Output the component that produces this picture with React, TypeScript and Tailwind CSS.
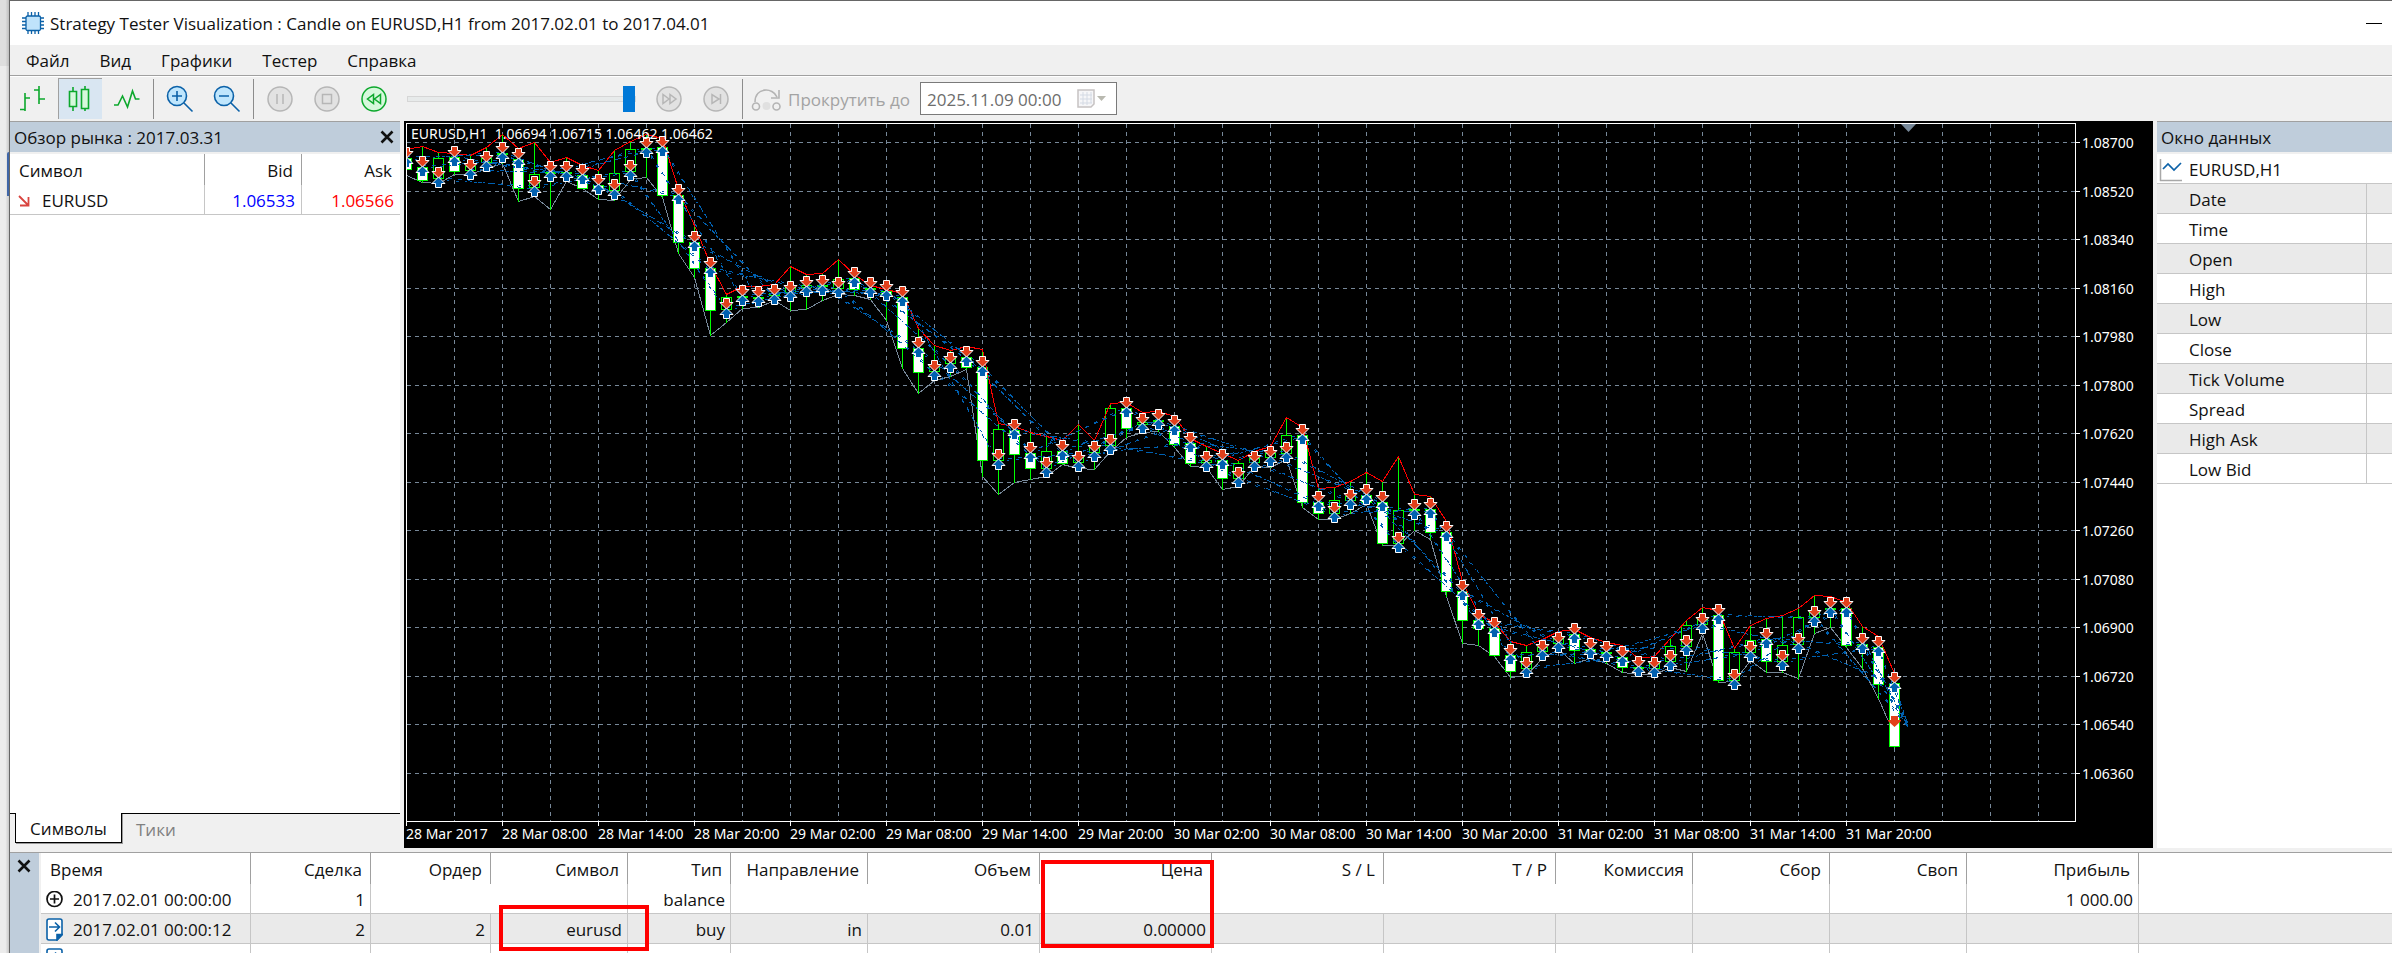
import React from "react";

type Candle = [x: number, open: number, high: number, low: number, close: number];

const FIRST_X = 406;
const STEP = 16;

const OHLC: [number, number, number, number][] = [
  [158, 150, 175, 169], [167, 147, 182, 180], [178, 153, 183, 158], [157, 154, 174, 171],
  [170, 156, 174, 166], [162, 148, 168, 158], [153, 135, 163, 154], [159, 149, 201, 188],
  [187, 143, 196, 174], [172, 163, 209, 173], [172, 158, 181, 173], [175, 166, 188, 188],
  [185, 171, 199, 188], [190, 151, 200, 173], [171, 142, 179, 149], [148, 135, 177, 149],
  [147, 139, 197, 195], [195, 190, 253, 242], [242, 226, 277, 268], [268, 265, 335, 310],
  [309, 295, 322, 297], [296, 287, 308, 297], [297, 287, 307, 298], [295, 285, 300, 293],
  [292, 267, 310, 287], [287, 275, 309, 285], [286, 274, 300, 285], [288, 260, 294, 279],
  [278, 275, 295, 289], [288, 286, 299, 289], [291, 290, 320, 295], [297, 294, 368, 348],
  [348, 329, 393, 372], [371, 346, 380, 366], [363, 351, 376, 358], [357, 347, 369, 367],
  [367, 350, 476, 460], [460, 424, 494, 429], [430, 427, 482, 454], [453, 433, 479, 468],
  [468, 437, 476, 451], [451, 441, 464, 463], [462, 425, 468, 457], [452, 441, 469, 447],
  [445, 404, 451, 408], [408, 403, 437, 428], [424, 413, 432, 422], [420, 412, 431, 421],
  [426, 417, 447, 444], [443, 439, 466, 463], [462, 447, 467, 460], [460, 454, 489, 478],
  [478, 461, 486, 463], [462, 452, 466, 458], [457, 447, 467, 453], [453, 418, 459, 435],
  [435, 428, 507, 502], [502, 489, 519, 513], [513, 488, 519, 500], [500, 482, 513, 496],
  [495, 473, 504, 502], [502, 482, 545, 543], [543, 457, 545, 510], [510, 495, 530, 509],
  [509, 497, 539, 532], [532, 522, 596, 591], [591, 582, 643, 620], [620, 615, 645, 628],
  [628, 623, 656, 655], [655, 642, 677, 671], [668, 646, 675, 652], [651, 640, 658, 647],
  [643, 632, 649, 637], [634, 630, 663, 650], [649, 638, 658, 651], [652, 643, 663, 653],
  [657, 646, 672, 667], [667, 659, 674, 668], [668, 657, 674, 662], [661, 639, 667, 646],
  [646, 621, 671, 625], [624, 608, 633, 619], [615, 611, 682, 680], [680, 649, 681, 652],
  [652, 626, 660, 640], [639, 619, 672, 661], [661, 616, 672, 645], [644, 609, 678, 617],
  [617, 596, 633, 611], [608, 597, 627, 609], [608, 603, 647, 645], [644, 627, 668, 646],
  [647, 637, 698, 684], [683, 674, 747, 746],
];

const CANDLES: Candle[] = OHLC.map(([o, h, l, c], i) => [FIRST_X + STEP * i, o, h, l, c]);

const PRICES = [
  "1.08700", "1.08520", "1.08340", "1.08160", "1.07980", "1.07800", "1.07620",
  "1.07440", "1.07260", "1.07080", "1.06900", "1.06720", "1.06540", "1.06360",
].map((label, i) => ({ label, y: 142 + Math.round(48.5 * i) }));

const TIMES = [
  "28 Mar 2017", "28 Mar 08:00", "28 Mar 14:00", "28 Mar 20:00", "29 Mar 02:00", "29 Mar 08:00",
  "29 Mar 14:00", "29 Mar 20:00", "30 Mar 02:00", "30 Mar 08:00", "30 Mar 14:00", "30 Mar 20:00",
  "31 Mar 02:00", "31 Mar 08:00", "31 Mar 14:00", "31 Mar 20:00",
].map((label, i) => ({ label, x: FIRST_X + 96 * i }));

const GRID_X = Array.from({ length: 34 }, (_, i) => 454 + 48 * i);

const points = (list: number[][]) => list.map(([x, y]) => `${x + 0.5},${y + 0.5}`).join(" ");

const HIGH_LINE = points(CANDLES.map(([x, , h]) => [x, h - 1]));
const LOW_LINE = points([...CANDLES.slice(0, -1).map(([x, , , l]) => [x, l]), [1888, 721]]);

const HOLD = 6;
const LAST = { x: 1908, y: 725 };
const DEALS = CANDLES.map(([x, open], i) => {
  const exit = CANDLES[i + HOLD];
  return { x, open, endX: exit ? exit[0] : LAST.x, endY: exit ? exit[1] : LAST.y };
});

function SellArrow({ x, y }: { x: number; y: number }) {
  return (
    <path
      d={`M${x - 2.5} ${y - 9.5}h6v4h3.500l-6.500 6.500l-6.500 -6.500h3.500z`}
      fill="#e2401c"
      stroke="#fff"
      strokeWidth="1"
    />
  );
}

function BuyArrow({ x, y }: { x: number; y: number }) {
  return (
    <path
      d={`M${x - 2.5} ${y + 10.5}h6v-4h3.500l-6.500 -6.500l-6.500 6.500h3.500z`}
      fill="#0060b0"
      stroke="#fff"
      strokeWidth="1"
    />
  );
}

function PriceChart() {
  return (
    <svg
      viewBox="404 121 1749 727"
      preserveAspectRatio="xMinYMin meet"
      className="block h-auto w-full bg-black"
      role="img"
      aria-label="EURUSD,H1"
    >
      <defs>
        <clipPath id="plot">
          <rect x="407" y="124" width="1668" height="697" />
        </clipPath>
      </defs>
      <g shapeRendering="crispEdges" stroke="#778899" strokeWidth="1" fill="none">
        {PRICES.map(({ y }) => (
          <line key={y} x1="407" x2="2075" y1={y + 0.5} y2={y + 0.5} strokeDasharray="4 4" />
        ))}
        {GRID_X.map((x) => (
          <line key={x} x1={x + 0.5} x2={x + 0.5} y1="124" y2="821" strokeDasharray="4 4" />
        ))}
      </g>
      <g clipPath="url(#plot)">
        <g shapeRendering="crispEdges" strokeWidth="1">
          <polyline points={LOW_LINE} fill="none" stroke="#778899" />
          {CANDLES.map(([x, o, h, l, c]) => {
            const top = Math.min(o, c);
            const height = Math.max(Math.abs(c - o), 1);
            return (
              <g key={x} stroke="#00ff00">
                <line x1={x + 0.5} x2={x + 0.5} y1={h} y2={l + 1} />
                <rect x={x - 4.5} y={top + 0.5} width="10" height={height} fill={c > o ? "#fff" : "#000"} />
              </g>
            );
          })}
          <polyline points={HIGH_LINE} fill="none" stroke="#ff0000" />
          <g stroke="#0060b0" fill="none">
            {DEALS.map((d) => (
              <g key={d.x}>
                <line x1={d.x} y1={d.open - 1} x2={d.endX} y2={d.endY + 2} strokeDasharray="4 6" />
                <line x1={d.x} y1={d.open + 2} x2={d.endX} y2={d.endY - 1} strokeDasharray="3 6 2 7" />
              </g>
            ))}
          </g>
        </g>
        {CANDLES.map(([x, o]) => (
          <g key={x}>
            <SellArrow x={x} y={o - 1} />
            <BuyArrow x={x} y={o - 1} />
          </g>
        ))}
        <path d="M1891 716h7v4h3v1l-6.500 6l-6.500 -6v-1h3z" fill="#e2401c" />
      </g>
      <path d="M1901 124h15l-7.500 8z" fill="#778899" />
      <g shapeRendering="crispEdges" stroke="#fff" fill="none">
        <path d="M406.500 821.500V123.500H2075.500V821.500H406.500" />
        {PRICES.map(({ y }) => (
          <line key={y} x1="2075" x2="2080" y1={y + 0.5} y2={y + 0.5} />
        ))}
        {TIMES.map(({ x }) => (
          <line key={x} x1={x + 0.5} x2={x + 0.5} y1="821" y2="826" />
        ))}
      </g>
      <g fill="#fff" fontFamily="'Noto Sans', 'DejaVu Sans', sans-serif" fontSize="14">
        <text x="411" y="139">{"EURUSD,H1\u00a0\u00a01.06694 1.06715 1.06462 1.06462"}</text>
        {PRICES.map(({ label, y }) => (
          <text key={label} x="2082" y={y + 6}>{label}</text>
        ))}
        {TIMES.map(({ label, x }) => (
          <text key={label} x={x} y="839">{label}</text>
        ))}
      </g>
    </svg>
  );
}

const toolButton = "flex h-[41px] w-11 items-center justify-center";

function ToolButton({ label, active, disabled, children }: {
  label: string; active?: boolean; disabled?: boolean; children: React.ReactNode;
}) {
  return (
    <button
      type="button"
      aria-label={label}
      disabled={disabled}
      className={active ? `${toolButton} border-t border-l border-[#a0a0a0] bg-[#d9e6f2]` : toolButton}
    >
      <svg width="28" height="28" viewBox="0 0 28 28" fill="none" strokeWidth="1.6">
        {children}
      </svg>
    </button>
  );
}

function Separator() {
  return <div className="mx-px h-10 w-px bg-[#8c8c8c]" />;
}

function Round({ green, children }: { green?: boolean; children: React.ReactNode }) {
  return (
    <g stroke={green ? "#0ca82c" : "#b6b6b6"} strokeWidth="1.5">
      <circle cx="14" cy="14" r="12" fill={green ? "#d6f8dc" : "#e2e2e2"} />
      {children}
    </g>
  );
}

function Toolbar() {
  return (
    <div className="flex h-11 items-center gap-[3px] border-t border-white pl-px">
      <ToolButton label="Бары">
        <path d="M1 24.500h5M6 26V8M6 13h5M15 5h5M20 1v18M20 14h6" stroke="#0ca82c" />
      </ToolButton>
      <ToolButton label="Свечи" active>
        <path d="M6 2v24M18 1v25" stroke="#0ca82c" />
        <path d="M2.500 6.500h7v15h-7zM14.500 4.500h7v19h-7z" stroke="#0ca82c" fill="#d6f8dc" />
      </ToolButton>
      <ToolButton label="Линия">
        <path d="M1 20h4l4.500-9 5 11 5-16 3 8h4" stroke="#0ca82c" />
      </ToolButton>
      <Separator />
      <ToolButton label="Увеличить">
        <g stroke="#0b61a8">
          <circle cx="11" cy="11" r="9.500" fill="#bfe6fd" />
          <path d="M18 18l8.500 8.500M6 11h10M11 6v10" />
        </g>
      </ToolButton>
      <ToolButton label="Уменьшить">
        <g stroke="#0b61a8">
          <circle cx="11" cy="11" r="9.500" fill="#bfe6fd" />
          <path d="M18 18l8.500 8.500M6 11h10" />
        </g>
      </ToolButton>
      <Separator />
      <ToolButton label="Пауза" disabled>
        <Round><path d="M11 9v10M17 9v10" /></Round>
      </ToolButton>
      <ToolButton label="Стоп" disabled>
        <Round><path d="M9.500 9.500h9v9h-9z" /></Round>
      </ToolButton>
      <ToolButton label="Медленнее">
        <Round green><path d="M13.500 9.500v9l-6-4.500zM20.500 9.500v9l-6-4.500z" /></Round>
      </ToolButton>
      <input
        type="range"
        aria-label="Скорость"
        defaultValue={100}
        className="mx-2 h-[26px] w-[229px] appearance-none bg-transparent [&::-webkit-slider-runnable-track]:h-[6px] [&::-webkit-slider-runnable-track]:border [&::-webkit-slider-runnable-track]:border-[#d6d6d6] [&::-webkit-slider-runnable-track]:bg-[#e7eaea] [&::-webkit-slider-thumb]:-mt-[11px] [&::-webkit-slider-thumb]:h-[26px] [&::-webkit-slider-thumb]:w-3 [&::-webkit-slider-thumb]:appearance-none [&::-webkit-slider-thumb]:bg-[#0078d7]"
      />
      <ToolButton label="Быстрее" disabled>
        <Round><path d="M8 9.500v9l6-4.500zM15 9.500v9l6-4.500z" /></Round>
      </ToolButton>
      <ToolButton label="В конец" disabled>
        <Round><path d="M10 9.500v9l7-4.500zM18.500 9v10" /></Round>
      </ToolButton>
      <Separator />
      <label htmlFor="skip-to" className="ml-1 flex items-center gap-[7px] pt-0.5 text-[#a3a3a3]">
        <svg width="30" height="28" viewBox="0 0 30 28" fill="none" stroke="#b4b4b4" strokeWidth="1.6">
          <circle cx="5" cy="20.500" r="3.500" />
          <circle cx="15.500" cy="20" r="4" fill="#e0e0e0" stroke="none" />
          <circle cx="25.500" cy="20.500" r="3.500" />
          <path d="M4 16C4 1 22 1 26 11M28 4v8h-8" />
        </svg>
        Прокрутить до
      </label>
      <div className="ml-[7px] flex h-[33px] w-[197px] items-center border border-[#7a7a7a] bg-white pl-1.5">
        <input
          id="skip-to"
          type="text"
          disabled
          defaultValue="2025.11.09 00:00"
          className="w-[150px] pt-0.5 text-[#6d6d6d]"
        />
        <svg width="30" height="20" viewBox="0 0 30 20" fill="none">
          <path d="M1 1h16v14l-3 3H1z" fill="#f6f6f8" stroke="#c6c2c2" strokeWidth="1.500" />
          <path d="M3 6h12M3 10h12M3 14h12M6 3v13M10 3v13M14 3v11" stroke="#d4dae4" />
          <path d="M20 7h9l-4.500 5z" fill="#b9b9b0" />
        </svg>
      </div>
    </div>
  );
}

function CloseIcon() {
  return (
    <svg width="14" height="14" viewBox="0 0 14 14" stroke="#111" strokeWidth="2.600">
      <path d="M1.500 1.500l11 11M12.500 1.500l-11 11" />
    </svg>
  );
}

function MarketWatch() {
  return (
    <section className="flex w-[390px] shrink-0 flex-col">
      <header className="flex h-[31px] shrink-0 items-center justify-between border-t border-[#a0a0a0] bg-[#bfcddb] pr-1.5 pl-1">
        <h2 className="pt-0.5">Обзор рынка : 2017.03.31</h2>
        <button type="button" aria-label="Закрыть"><CloseIcon /></button>
      </header>
      <div className="mt-0.5 flex-1 bg-white">
        <table className="w-full table-fixed border-separate border-spacing-0">
          <colgroup>
            <col />
            <col className="w-[97px]" />
            <col className="w-[98px]" />
          </colgroup>
          <thead>
            <tr className="text-right">
              <th className="h-[31px] border-r border-[#a0a0a0] pt-0.5 pl-[9px] text-left font-normal">Символ</th>
              <th className="border-r border-[#a0a0a0] pt-0.5 pr-2 font-normal">Bid</th>
              <th className="pt-0.5 pr-2 font-normal">Ask</th>
            </tr>
          </thead>
          <tbody>
            <tr className="text-right">
              <td className="h-[30px] border-r border-b border-[#c6c6c6] pt-0.5 text-left">
                <div className="flex items-center gap-3 pl-2">
                  <svg width="12" height="12" viewBox="0 0 12 12" fill="none" stroke="#d9443f" strokeWidth="1.800">
                    <path d="M1 1l9 9M10.500 2v8.500H2" />
                  </svg>
                  EURUSD
                </div>
              </td>
              <td className="border-r border-b border-[#c6c6c6] pt-0.5 pr-1.5 text-[#0000ff]">1.06533</td>
              <td className="border-b border-[#c6c6c6] pt-0.5 pr-1.5 text-[#ff0000]">1.06566</td>
            </tr>
          </tbody>
        </table>
      </div>
      <div role="tablist" className="flex h-[35px] shrink-0 items-start">
        <div className="h-px w-[5px] bg-black" />
        <button
          type="button"
          role="tab"
          aria-selected="true"
          className="h-[30px] w-[107px] border-x border-b border-black bg-white pt-0.5 shadow-[1px_1px_0_#999]"
        >
          Символы
        </button>
        <button type="button" role="tab" aria-selected="false" className="h-[30px] flex-1 border-t border-black pt-0.5 pl-3.5 text-left text-[#808080]">
          Тики
        </button>
      </div>
    </section>
  );
}

const DATA_ROWS = ["Date", "Time", "Open", "High", "Low", "Close", "Tick Volume", "Spread", "High Ask", "Low Bid"];

function DataWindow() {
  return (
    <section className="flex w-[235px] shrink-0 flex-col">
      <h2 className="flex h-[31px] shrink-0 items-center border-t border-[#a0a0a0] bg-[#bfcddb] pt-0.5 pl-1">Окно данных</h2>
      <div className="mt-0.5 flex-1 bg-white">
        <div className="flex h-[30px] items-center gap-[7px] border-b border-[#c6c6c6] pt-0.5 pl-0.5">
          <svg width="23" height="24" viewBox="0 0 23 24" fill="none">
            <path d="M1.500 1v21.500H23" stroke="#a8a8a8" strokeWidth="1.500" />
            <path d="M4 11l5-5 6 6 7-7" stroke="#0b61a8" strokeWidth="1.700" />
          </svg>
          EURUSD,H1
        </div>
        <table className="w-full table-fixed border-separate border-spacing-0">
          <tbody>
            {DATA_ROWS.map((name) => (
              <tr key={name} className="odd:bg-[#eaeaea]">
                <th scope="row" className="h-[30px] w-[210px] border-r border-b border-[#c6c6c6] pt-0.5 pl-8 text-left font-normal">{name}</th>
                <td className="border-b border-[#c6c6c6]" />
              </tr>
            ))}
          </tbody>
        </table>
      </div>
    </section>
  );
}

const headCell = "h-[31px] border-r border-[#a0a0a0] pt-0.5 pr-2 font-normal";
const openCell = "h-[30px] border-b border-[#c6c6c6]";
const cell = "h-[30px] border-r border-b border-[#c6c6c6] pt-0.5 pr-[5px]";

function DealIcon() {
  return (
    <svg width="17" height="23" viewBox="0 0 17 23" fill="none" stroke="#0b61a8" strokeWidth="1.600">
      <path d="M3 1h11q2 0 2 2v14l-5 5H3q-2 0-2-2V3q0-2 2-2z" fill="#fff" />
      <path d="M16 16.500h-5V22z" fill="#0b61a8" />
      <path d="M3 9h10M9 4.500L13.500 9 9 13.500" />
    </svg>
  );
}

function DealRow({ time, id, shaded, price }: { time: string; id: string; shaded?: boolean; price: string }) {
  return (
    <tr className={shaded ? "bg-[#eaeaea]" : "bg-white"}>
      <td className={`${cell} text-left`}>
        <div className="flex items-center gap-[10px] pl-[5px]"><DealIcon />{time}</div>
      </td>
      <td className={cell}>{id}</td>
      <td className={cell}>{id}</td>
      <td className={cell}>eurusd</td>
      <td className={cell}>buy</td>
      <td className={cell}>in</td>
      <td className={cell}>0.01</td>
      <td className={cell}>{price}</td>
      <td className={cell} />
      <td className={cell} />
      <td className={cell} />
      <td className={cell} />
      <td className={cell} />
      <td className={cell} />
      <td className={openCell} />
    </tr>
  );
}

const HEADINGS = [
  "Сделка", "Ордер", "Символ", "Тип", "Направление", "Объем", "Цена",
  "S / L", "T / P", "Комиссия", "Сбор", "Своп", "Прибыль",
];

function Deals() {
  return (
    <section className="relative flex min-h-0 flex-1 overflow-hidden border-t border-[#a0a0a0]">
      <div className="w-[29px] shrink-0 bg-[#bfcddb] pt-1.5 pl-[7px]">
        <button type="button" aria-label="Закрыть" className="flex"><CloseIcon /></button>
      </div>
      <div className="ml-0.5 flex-1 bg-white">
        <table className="w-full table-fixed border-separate border-spacing-0 text-right">
          <colgroup>
            <col className="w-[210px]" />
            <col className="w-[120px]" />
            <col className="w-[120px]" />
            <col className="w-[137px]" />
            <col className="w-[103px]" />
            <col className="w-[137px]" />
            <col className="w-[172px]" />
            <col className="w-[172px]" />
            <col className="w-[172px]" />
            <col className="w-[172px]" />
            <col className="w-[137px]" />
            <col className="w-[137px]" />
            <col className="w-[137px]" />
            <col className="w-[172px]" />
            <col />
          </colgroup>
          <thead>
            <tr>
              <th className={`${headCell} pl-[9px] text-left`}>Время</th>
              {HEADINGS.map((name) => <th key={name} className={headCell}>{name}</th>)}
              <td />
            </tr>
          </thead>
          <tbody>
            <tr>
              <td className={`${cell} text-left`}>
                <div className="flex items-center gap-[10px] pl-[5px]">
                  <svg width="17" height="18" viewBox="0 0 17 18" fill="none" stroke="#111" strokeWidth="1.700">
                    <circle cx="8.500" cy="8" r="7.500" />
                    <path d="M4 8h9M8.500 3.500v9" />
                  </svg>
                  2017.02.01 00:00:00
                </div>
              </td>
              <td className={cell}>1</td>
              <td className={cell} colSpan={2} />
              <td className={cell}>balance</td>
              <td className={openCell} colSpan={5} />
              <td className={cell} />
              <td className={cell} />
              <td className={cell} />
              <td className={cell}>1 000.00</td>
              <td className={openCell} />
            </tr>
            <DealRow time="2017.02.01 00:00:12" id="2" shaded price="0.00000" />
            <DealRow time="2017.02.01 01:00:00" id="3" price="0.00000" />
          </tbody>
        </table>
      </div>
      <div className="absolute top-[52px] left-[489px] h-[46px] w-[150px] border-4 border-[#ff0000]" />
      <div className="absolute top-[7px] left-[1031px] h-[88px] w-[173px] border-4 border-[#ff0000]" />
    </section>
  );
}

function ChipIcon() {
  return (
    <svg width="22" height="22" viewBox="0 0 22 22" fill="none" stroke="#0b61a8" strokeWidth="1.300">
      <path d="M6 0v22M9.500 0v22M13 0v22M16.500 0v22M0 6h22M0 9.500h22M0 13h22M0 16.500h22" />
      <rect x="4" y="4" width="14.500" height="14.500" rx="1.500" fill="#bfe3fb" />
    </svg>
  );
}

export default function App() {
  return (
    <div className="flex h-screen overflow-hidden bg-[#f0f0f0] font-['Open_Sans','Noto_Sans',sans-serif] text-[17px] leading-6 text-[#111]">
      <div className="flex w-[9px] shrink-0 flex-col bg-linear-to-r from-[#ececec] from-60% to-[#c8c8c8]">
        <div className="h-[66px] bg-linear-to-r from-[#dedede] from-60% to-[#bdbdbd]" />
        <div className="mt-[86px] h-11 w-[2px] self-end rounded-tl-full bg-[#3f66a8]" />
      </div>
      <div className="flex min-w-0 flex-1 flex-col border-t border-l border-[#666]">
        <header className="flex h-11 shrink-0 items-center bg-white pr-2.5 pl-3">
          <ChipIcon />
          <h1 className="ml-1.5 flex-1 pt-0.5">Strategy Tester Visualization : Candle on EURUSD,H1 from 2017.02.01 to 2017.04.01</h1>
          <button type="button" aria-label="Свернуть" className="flex h-6 w-4 items-center">
            <span className="h-px w-4 bg-black" />
          </button>
        </header>
        <nav className="flex h-[31px] shrink-0 items-center gap-[30px] border-b border-[#a0a0a0] pt-0.5 pl-4">
          <button type="button">Файл</button>
          <button type="button">Вид</button>
          <button type="button">Графики</button>
          <button type="button">Тестер</button>
          <button type="button">Справка</button>
        </nav>
        <Toolbar />
        <main className="mt-px mb-1 flex shrink-0 gap-1">
          <MarketWatch />
          <div className="min-w-0 flex-1"><PriceChart /></div>
          <DataWindow />
        </main>
        <Deals />
      </div>
    </div>
  );
}
